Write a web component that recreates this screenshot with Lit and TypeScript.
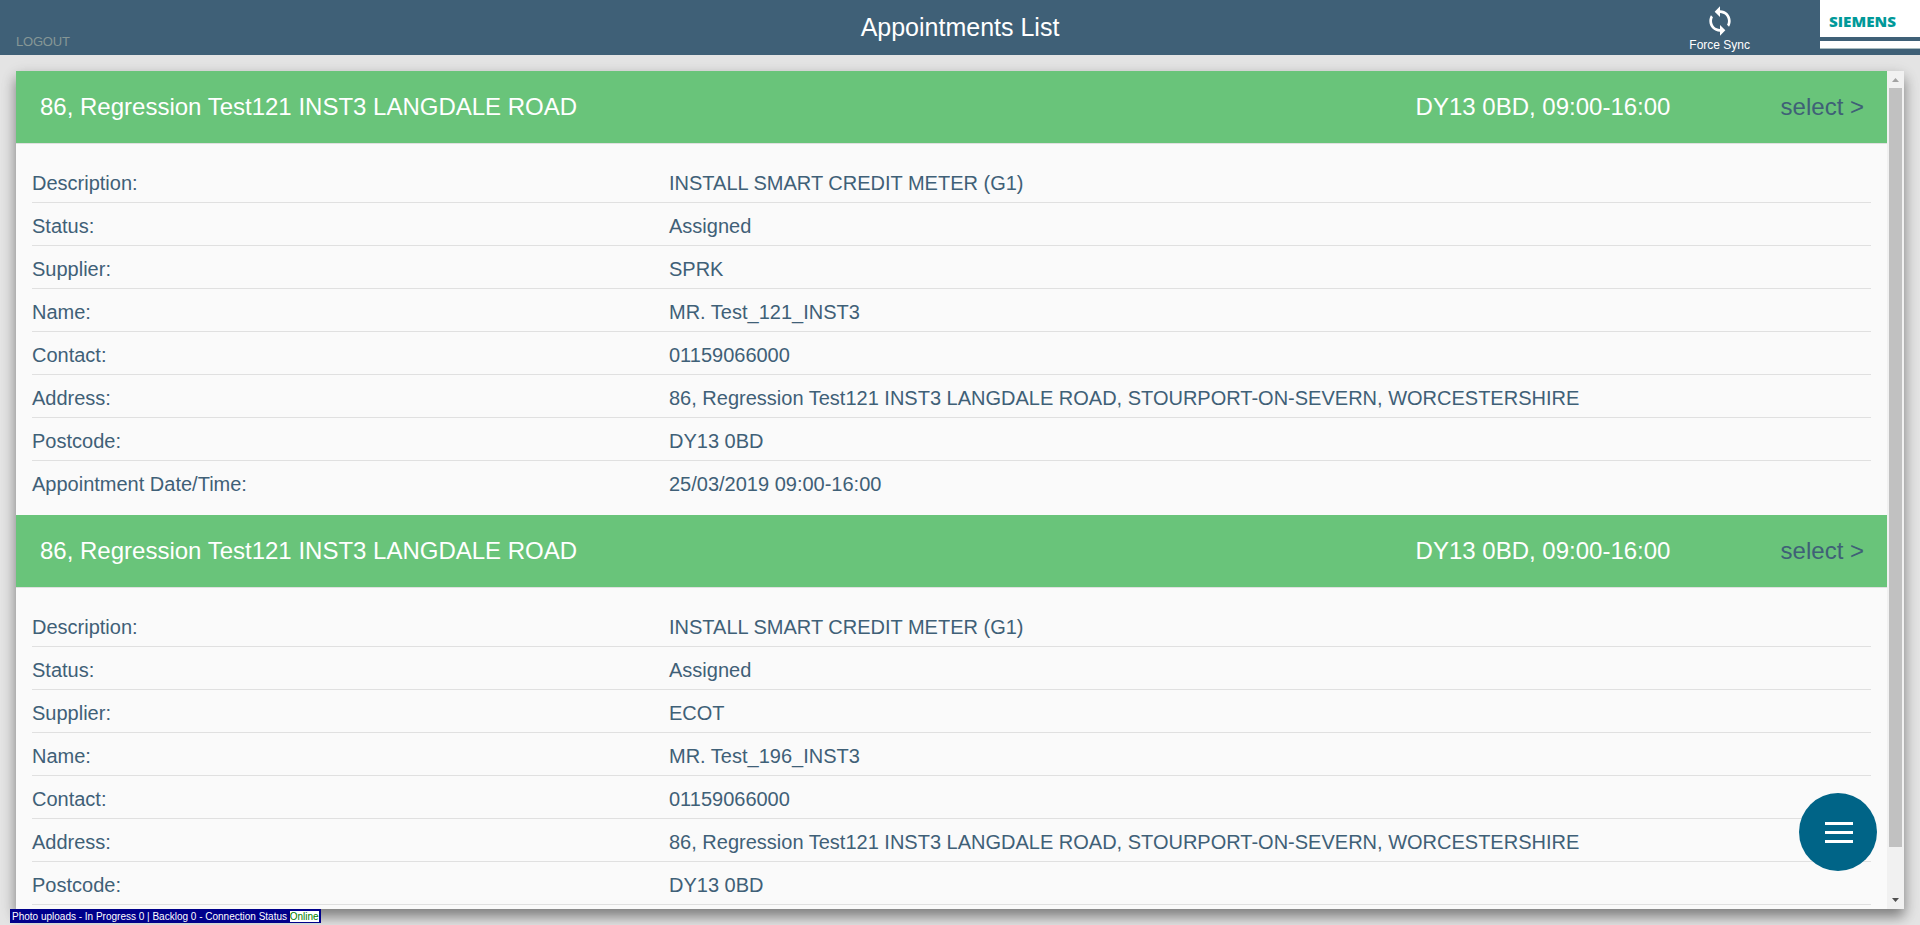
import { LitElement, html, css } from "lit";
import { customElement, property } from "lit/decorators.js";

interface Appointment {
  title: string;
  slot: string;
  details: [string, string][];
}

const appointment = (supplier: string, name: string, full: boolean): Appointment => ({
  title: "86, Regression Test121 INST3 LANGDALE ROAD",
  slot: "DY13 0BD, 09:00-16:00",
  details: [
    ["Description:", "INSTALL SMART CREDIT METER (G1)"],
    ["Status:", "Assigned"],
    ["Supplier:", supplier],
    ["Name:", name],
    ["Contact:", "01159066000"],
    ["Address:", "86, Regression Test121 INST3 LANGDALE ROAD, STOURPORT-ON-SEVERN, WORCESTERSHIRE"],
    ["Postcode:", "DY13 0BD"],
    full ? ["Appointment Date/Time:", "25/03/2019 09:00-16:00"] : ["", ""],
  ],
});

const APPOINTMENTS = [
  appointment("SPRK", "MR. Test_121_INST3", true),
  appointment("ECOT", "MR. Test_196_INST3", false),
];

@customElement("top-bar")
class TopBar extends LitElement {
  static styles = css`
    :host {
      display: grid;
      grid-template-columns: 1fr auto 1fr;
      height: 55px;
      background: #3f6077;
      color: #fff;
    }
    .logout {
      align-self: end;
      padding: 0 0 6px 16px;
      font-size: 13px;
      line-height: 15px;
      letter-spacing: -0.2px;
      color: #869796;
    }
    .title {
      font-size: 25px;
      line-height: 54px;
    }
    .right {
      display: flex;
      justify-content: flex-end;
      gap: 70px;
    }
    .sync {
      display: flex;
      flex-direction: column;
      align-items: center;
      padding-top: 5px;
      font-size: 12px;
      line-height: 14px;
    }
    .sync svg {
      display: block;
      width: 32px;
      height: 32px;
      margin-bottom: 1px;
    }
    .brand {
      display: flex;
      flex-direction: column;
      gap: 4px;
      width: 100px;
    }
    .name {
      height: 37px;
      background: #fff;
    }
    .name svg {
      display: block;
    }
    .strip {
      height: 7px;
      background: #fff;
      border-bottom: 1px solid #a9bcc0;
    }
  `;
  render() {
    return html`
      <div class="logout">LOGOUT</div>
      <div class="title">Appointments List</div>
      <div class="right">
        <div class="sync">
          <svg viewBox="0 0 24 24" fill="#fff">
            <path d="M12 4V1L8 5l4 4V6c3.31 0 6 2.69 6 6 0 1.01-.25 1.97-.7 2.8l1.46 1.46C19.54 15.03 20 13.57 20 12c0-4.42-3.58-8-8-8zm0 14c-3.31 0-6-2.69-6-6 0-1.01.25-1.97.7-2.8L5.24 7.74C4.46 8.97 4 10.43 4 12c0 4.42 3.58 8 8 8v3l4-4-4-4v3z" />
          </svg>
          <span>Force Sync</span>
        </div>
        <div class="brand">
          <div class="name">
            <svg width="100" height="37">
              <text x="9" y="26.5" font-family="Open Sans, sans-serif" font-weight="800" font-size="14.5" textLength="67" lengthAdjust="spacingAndGlyphs" fill="#009999">SIEMENS</text>
            </svg>
          </div>
          <div class="strip"></div>
        </div>
      </div>
    `;
  }
}

@customElement("appointment-card")
class AppointmentCard extends LitElement {
  @property({ attribute: false }) data!: Appointment;
  static styles = css`
    :host {
      display: block;
      flex: none;
      color: #3f6077;
    }
    .head {
      display: flex;
      align-items: center;
      height: 72px;
      padding: 0 23px 0 24px;
      background: #69c47a;
      border-bottom: 1px solid #e0e0e0;
      background-clip: padding-box;
      font-size: 24px;
      color: #fff;
    }
    .name {
      flex: 1;
    }
    .slot {
      width: 365px;
    }
    .select {
      color: #3f6077;
    }
    .rows {
      padding: 16px 16px 11px;
    }
    .row {
      display: grid;
      grid-template-columns: 637px 1fr;
      height: 42px;
      line-height: 47px;
      font-size: 20px;
      border-bottom: 1px solid #e0e0e0;
    }
    .row:last-child {
      border-bottom-color: transparent;
    }
  `;
  render() {
    return html`
      <div class="head">
        <span class="name">${this.data.title}</span>
        <span class="slot">${this.data.slot}</span>
        <span class="select">select &gt;</span>
      </div>
      <div class="rows">
        ${this.data.details.map(
          ([label, value]) => html`<div class="row"><span>${label}</span><span>${value}</span></div>`
        )}
      </div>
    `;
  }
}

@customElement("app-root")
class AppRoot extends LitElement {
  static styles = css`
    :host {
      display: flex;
      flex-direction: column;
      position: relative;
      height: 925px;
      overflow: hidden;
      background: #e4e4e4;
      font-family: "Liberation Sans", Arial, sans-serif;
    }
    .panel {
      display: flex;
      height: 838px;
      margin: 16px;
      background: #fafafa;
      box-shadow: 0 8px 12px rgba(0, 0, 0, 0.38), 0 4px 16px rgba(0, 0, 0, 0.12);
    }
    .list {
      flex: 1;
      display: flex;
      flex-direction: column;
      overflow: hidden;
    }
    .track {
      display: flex;
      flex-direction: column;
      width: 17px;
      background: #f1f1f1;
    }
    .track svg {
      display: block;
      flex: none;
    }
    .thumb {
      height: 759px;
      margin: 0 2px auto;
      background: #c1c1c1;
    }
    .menu {
      position: absolute;
      right: 43px;
      bottom: 54px;
      display: grid;
      place-items: center;
      box-sizing: border-box;
      width: 78px;
      height: 78px;
      padding: 1px 0 0 1px;
      border-radius: 50%;
      background: #006487;
    }
    .status {
      position: absolute;
      left: 10px;
      bottom: 2px;
      display: flex;
      align-items: center;
      height: 14px;
      padding: 0 2px;
      background: #00008b;
      color: #fff;
      font-size: 10px;
      white-space: pre;
    }
    .online {
      background: #fff;
      color: #008000;
      line-height: 11px;
    }
  `;
  render() {
    return html`
      <top-bar></top-bar>
      <div class="panel">
        <div class="list">
          ${APPOINTMENTS.map((a) => html`<appointment-card .data=${a}></appointment-card>`)}
        </div>
        <div class="track">
          <svg width="17" height="17"><path d="M5 11h7L8.5 7z" fill="#a3a3a3" /></svg>
          <div class="thumb"></div>
          <svg width="17" height="17"><path d="M5 6h7L8.5 10z" fill="#505050" /></svg>
        </div>
      </div>
      <div class="menu">
        <svg width="28" height="21" fill="#fff">
          <rect width="28" height="3" /><rect y="9" width="28" height="3" /><rect y="18" width="28" height="3" />
        </svg>
      </div>
      <div class="status">Photo uploads - In Progress 0 | Backlog 0 - Connection Status <span class="online">Online</span></div>
    `;
  }
}
